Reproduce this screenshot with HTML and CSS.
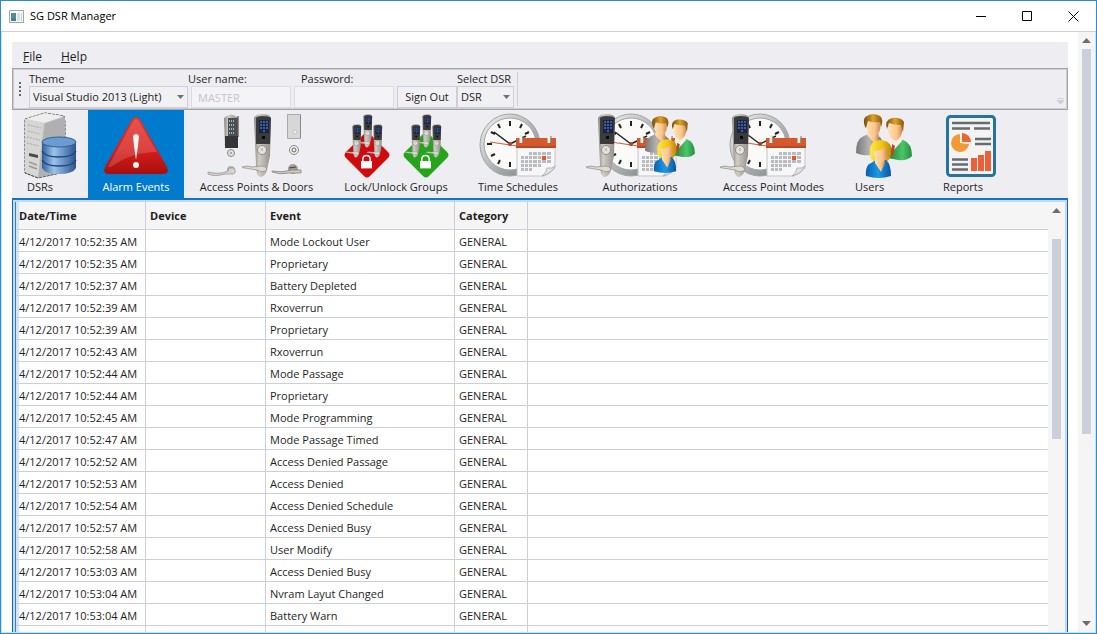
FILE: index.html
```html
<!DOCTYPE html>
<html lang="en">
<head>
<meta charset="utf-8">
<title>SG DSR Manager</title>
<link rel="stylesheet" href="styles.css">
</head>
<body>
<svg class="defs" aria-hidden="true">
  <defs>
    <linearGradient id="steel"><stop offset="0" stop-color="#8a867f"/><stop offset=".3" stop-color="#d0cdc7"/><stop offset="1" stop-color="#928e87"/></linearGradient>
    <linearGradient id="db"><stop offset="0" stop-color="#2e5f9e"/><stop offset=".35" stop-color="#9cc3ea"/><stop offset="1" stop-color="#2a5491"/></linearGradient>
    <linearGradient id="red" x2="0" y2="1"><stop offset="0" stop-color="#e0342c"/><stop offset=".55" stop-color="#d8201d"/><stop offset="1" stop-color="#a90d0e"/></linearGradient>
    <linearGradient id="rim" x2="1" y2="1"><stop offset="0" stop-color="#f4f4f4"/><stop offset=".5" stop-color="#b5b8b8"/><stop offset="1" stop-color="#777b7b"/></linearGradient>
    <linearGradient id="skin"><stop offset="0" stop-color="#ffe2b8"/><stop offset=".6" stop-color="#f9c68a"/><stop offset="1" stop-color="#c98548"/></linearGradient>
    <linearGradient id="hair"><stop offset="0" stop-color="#7a4a08"/><stop offset=".5" stop-color="#dda32a"/><stop offset="1" stop-color="#8a560d"/></linearGradient>
    <linearGradient id="blonde"><stop offset="0" stop-color="#ffe84d"/><stop offset=".6" stop-color="#efc010"/><stop offset="1" stop-color="#b98a08"/></linearGradient>
    <linearGradient id="grey"><stop offset="0" stop-color="#777"/><stop offset=".5" stop-color="#b5b5b5"/><stop offset="1" stop-color="#6f6f6f"/></linearGradient>
    <linearGradient id="green"><stop offset="0" stop-color="#1c7f35"/><stop offset=".6" stop-color="#4fc467"/><stop offset="1" stop-color="#1e9140"/></linearGradient>
    <linearGradient id="blue"><stop offset="0" stop-color="#0b5fb0"/><stop offset=".5" stop-color="#1b9ae6"/><stop offset="1" stop-color="#0a559f"/></linearGradient>
  </defs>
  <symbol id="lever" viewBox="0 0 31 64">
    <path d="M12 4Q14 0 20 0Q28 0 29 4L28 42L25 56Q23 63 18 63Q14 61 14 51Z" fill="url(#steel)"/>
    <path d="M14 4Q15 2 20 2Q27 2 29 4L28 30H14Z" fill="#3a3b3b"/>
    <path d="M17 6h10v13H17z" fill="#1b2440"/>
    <path d="M18 7h2v2h-2zM21 7h2v2h-2zM24 7h2v2h-2zM18 10h2v2h-2zM21 10h2v2h-2zM24 10h2v2h-2zM18 13h2v2h-2zM21 13h2v2h-2zM24 13h2v2h-2zM21 16h2v2h-2z" fill="#3f5ba6"/>
    <path d="M20 22h3v3h-3z" fill="#090909"/>
    <circle cx="20" cy="36" r="4.500" fill="#e4e2dd" stroke="#8f8b84"/>
    <path d="M20 34v3" stroke="#a5a199"/>
    <path d="M0 53Q5 51 10 53L20 52Q26 53 24 57Q19 59 15 56L3 54Q0 54 0 53Z" fill="#dedbd5" stroke="#8c8984" stroke-width=".7"/>
  </symbol>
  <symbol id="clock" viewBox="0 0 62 64">
    <ellipse cx="31" cy="32" rx="30" ry="31" fill="url(#rim)" stroke="#a2a6a6"/>
    <circle cx="31" cy="31" r="26" fill="#fafaf9" stroke="#a3a6a6"/>
    <path d="M31 8v5M31 49v5M8 31h5M49 31h5M19 11l2 4M43 11l-2 4M12 19l4 2M50 19l-4 2M12 43l4-2M19 51l2-4M43 51l-2-4M50 43l-4-2" stroke="#222" stroke-width="2"/>
    <path d="M31 31L15 19M31 31l16-8" stroke="#222" stroke-width="1.500"/>
    <path d="M11 29l27 4" stroke="#d75a37"/><circle cx="31" cy="31" r="2" fill="#b33c23"/>
  </symbol>
  <symbol id="calendar" viewBox="0 0 40 42">
    <path d="M1 8h38v25q-5 6-11 8H1z" fill="#f7f7f8" stroke="#c6c6c9"/>
    <path d="M0 3h40v10H0z" fill="#d4582c"/><path d="M0 11h40v2H0z" fill="#b94723"/>
    <path d="M5 0v8M33 0v8" stroke="#f2efea" stroke-width="3"/><path d="M7 1v8M35 1v8" stroke="#7e716b"/>
    <path d="M13 17h3v3h-3zM17 17h4v3h-4zM22 17h3v3h-3zM26 17h4v3h-4zM31 17h4v3h-4zM5 21h3v3H5zM9 21h3v3H9zM13 21h3v3h-3zM17 21h4v3h-4zM22 21h3v3h-3zM31 21h4v3h-4zM5 25h3v3H5zM9 25h3v3H9zM13 25h3v3h-3zM17 25h4v3h-4zM22 25h3v3h-3zM26 25h4v3h-4zM31 25h4v3h-4zM5 29h3v3H5zM9 29h3v3H9zM13 29h3v3h-3zM17 29h4v3h-4zM22 29h3v3h-3zM5 33h3v3H5zM9 33h3v3H9zM13 33h3v3h-3z" fill="#b8bcc0"/>
    <path d="M26 21h4v4h-4z" fill="#e8552a"/>
    <path d="M39 31Q35 39 26 41Q31 37 31 33Q36 34 39 31Z" fill="#e3e3e6" stroke="#9d9da2" stroke-width=".7"/>
  </symbol>
  <symbol id="people" viewBox="0 0 56 64">
    <path d="M0 39Q0 26 6 23L12 20L24 23L27 28V40Q8 43 0 39Z" fill="url(#grey)"/>
    <path d="M12 18h10l1 6l-4 6l-8-9z" fill="url(#skin)"/>
    <path d="M10 8Q10 3 17 3Q25 3 25 9L24 16Q21 23 17 23Q12 20 10 13Z" fill="url(#skin)"/>
    <path d="M9 13Q6 4 11 2Q17-2 24 2Q28 5 25 13L24 8Q18 9 12 7L10 14Z" fill="url(#hair)"/>
    <path d="M32 44V31Q34 28 39 26L47 26Q56 29 56 42Q52 47 42 46Z" fill="url(#green)"/>
    <path d="M34 24h11l1 3l-9 10l-4-8z" fill="#f4efe8"/><path d="M36 30l3 2l-2 9h-2z" fill="#cc3d20"/>
    <path d="M32 11Q33 6 40 6Q47 7 47 13Q46 24 40 27Q34 26 32 17Z" fill="url(#skin)"/>
    <path d="M31 15Q28 6 36 4Q45 3 48 8L47 18L45 11Q38 11 33 9Z" fill="url(#hair)"/>
    <path d="M14 41Q12 26 25 26Q37 27 35 40Q34 46 30 48H19Q14 46 14 41Z" fill="url(#blonde)"/>
    <path d="M10 62Q9 51 15 49L20 46L30 46Q35 50 35 62Q23 66 10 62Z" fill="url(#blue)"/>
    <path d="M19 45h9l1 4l-4 9l-6-9z" fill="url(#skin)"/>
    <path d="M17 37Q24 37 29 33L32 38Q31 47 25 49Q18 46 17 37Z" fill="url(#skin)"/>
  </symbol>
  <symbol id="padlock" viewBox="0 0 12 15">
    <path d="M0 7h12v8H0z" fill="#fff"/><path d="M2 8V5q0-4 4-4t4 4v3" fill="none" stroke="#fff" stroke-width="1.500"/>
  </symbol>
  <symbol id="up" viewBox="0 0 9 5"><path d="M0 5L4.500 0L9 5z" fill="#6d6d70"/></symbol>
  <symbol id="down" viewBox="0 0 9 5"><path d="M0 0L4.500 5L9 0z" fill="#6d6d70"/></symbol>
</svg>

<div class="window">
  <header class="titlebar">
    <svg class="app-icon" viewBox="0 0 15 13"><path d="M.5.5h14v12H.5z" fill="#f6f8f8" stroke="#9ca5ac"/><path d="M2 3h5v8H2z" fill="#4b9188"/><path d="M2 8h5v3H2z" fill="#52739d"/><path d="M8 3h3v8H8z" fill="#dbe1e3"/><path d="M12 3h1v8h-1z" fill="#bfd3dc"/></svg>
    <h1 class="title">SG DSR Manager</h1>
    <button class="caption" aria-label="Minimize"><svg viewBox="0 0 11 11"><path d="M0 5.500h10" stroke="#000"/></svg></button>
    <button class="caption" aria-label="Maximize"><svg viewBox="0 0 11 11"><path d="M.5.5h9v9h-9z" fill="none" stroke="#000"/></svg></button>
    <button class="caption" aria-label="Close"><svg viewBox="0 0 11 11"><path d="M.5.5l10 10M10.500.5l-10 10" stroke="#000"/></svg></button>
  </header>

  <div class="client">
    <main class="main">
      <nav class="menu"><button class="menu-item"><u>F</u>ile</button><button class="menu-item"><u>H</u>elp</button></nav>

      <form class="toolbar">
        <span class="grip"><i></i><i></i><i></i><i></i></span>
        <div class="field theme"><label for="theme">Theme</label>
          <span class="drop"><select id="theme"><option>Visual Studio 2013 (Light)</option></select></span></div>
        <div class="field credential"><label for="user">User name:</label><input id="user" type="text" placeholder="MASTER" disabled></div>
        <div class="field credential password"><label for="pass">Password:</label><input id="pass" type="password" disabled></div>
        <button class="sign-out" type="button">Sign Out</button>
        <div class="field dsr"><label for="dsr">Select DSR</label>
          <span class="drop"><select id="dsr"><option>DSR</option></select></span></div>
        <span class="divider"></span>
        <svg class="overflow" viewBox="0 0 7 6"><path d="M0 .5h7M0 2.500h7L3.500 6z" fill="#c9cad5" stroke="#c9cad5" stroke-width=".7"/></svg>
      </form>

      <nav class="tabs">
        <button class="tab start">
          <svg viewBox="12 112 76 68">
            <path d="M25 119l20-6l19 3l1 6v50l-27 6l-13-5z" fill="#c8c8c7" stroke="#333" stroke-dasharray="3 1"/>
            <path d="M25 119l20-6l19 3l-19 7z" fill="#ededec"/><path d="M45 123l20-6v54l-27 7z" fill="#aeb0b1"/><path d="M25 119l18 4l-5 54l-13-5z" fill="#d6d6d5"/>
            <path d="M28 125l13 3M28 131l12 3M27 137l13 3M27 143l12 3" stroke="#aaa" stroke-dasharray="2 1"/><path d="M29 153l9 2v3l-9-2z" fill="#4b4b4b"/><path d="M29 162l8 3M29 166l8 3" stroke="#999" stroke-width="1.500"/>
            <path d="M42 142v26q3 6 17 6t17-6v-26z" fill="url(#db)"/><path d="M42 151q3 6 17 6t17-6M42 160q3 6 17 6t17-6" fill="none" stroke="#1e477c" stroke-width="1.500"/><ellipse cx="59" cy="142" rx="17" ry="5" fill="#6a9bd1" stroke="#315f98"/>
          </svg><span>DSRs</span></button>
        <button class="tab active">
          <svg viewBox="88 112 96 68"><path d="M136 117q3 0 5 4l26 46q3 7-4 7h-54q-7 0-4-7l26-46q2-4 5-4z" fill="url(#red)"/><path d="M136 119q2 0 4 4l17 29q-26 0-46 15q-4 0-2-2l23-42q2-4 4-4z" fill="#fff" opacity=".16"/><path d="M133 136q3-4 6 0l-1 10l-2 14l-2-14z" fill="#f7f4ef"/><circle cx="136" cy="165" r="3" fill="#f7f4ef"/></svg>
          <span>Alarm Events</span></button>
        <button class="tab">
          <svg viewBox="184 112 145 68">
            <path d="M224 118q7-7 14 0v29h-13z" fill="url(#steel)"/><path d="M228 118h9v18h-9z" fill="#4a5153"/><path d="M229 121h6M229 125h6M229 129h6M229 133h6" stroke="#93b7bd" stroke-width="2" stroke-dasharray="1 1"/><path d="M225 136h13v12h-13z" fill="#353537"/><path d="M238 116v21" stroke="#222"/>
            <circle cx="231" cy="153" r="3.500" fill="#e2e1df" stroke="#8a8986"/><path d="M231 152v2" stroke="#777"/>
            <circle cx="231" cy="170" r="4" fill="#b7b4ae"/><path d="M208 172q12 3 20-1l1-3h5q3 5-1 6h-8q-11 3-17 0z" fill="#d6d3cd" stroke="#918d87" stroke-width=".7"/>
            <use href="#lever" x="242" y="114" width="31" height="64"/>
            <path d="M287.500 114.500h13v24h-13z" fill="#d7d7d8" stroke="#aaa"/><path d="M300.500 115v23" stroke="#888"/><circle cx="295" cy="132" r="2" fill="#eee" stroke="#aaa" stroke-width=".6"/>
            <circle cx="294" cy="150" r="4.500" fill="#f0efee" stroke="#888"/><circle cx="294" cy="150" r="2" fill="none" stroke="#666"/>
            <circle cx="293" cy="169" r="5" fill="#a29f9a"/><path d="M272 171q10 2 20-1h9v3h-12q-9 2-17-1z" fill="#d1cec8" stroke="#77746f" stroke-width=".7"/><path d="M289 168l7-1" stroke="#444"/>
          </svg><span>Access Points &amp; Doors</span></button>
        <button class="tab">
          <svg viewBox="329 112 134 68">
            <path d="M364 134q3-3 6 0l18 18q3 3 0 6l-18 18q-3 3-6 0l-18-18q-3-3 0-6z" fill="#cf0b10"/><path d="M423 134q3-3 6 0l18 18q3 3 0 6l-18 18q-3 3-6 0l-18-18q-3-3 0-6z" fill="#27a51a"/>
            <use href="#lever" x="356" y="114" width="18" height="34"/><use href="#lever" x="345" y="124" width="18" height="34"/><use href="#lever" x="366" y="124" width="18" height="34"/>
            <use href="#lever" x="415" y="114" width="18" height="34"/><use href="#lever" x="404" y="124" width="18" height="34"/><use href="#lever" x="425" y="124" width="18" height="34"/>
            <use href="#padlock" x="361" y="154" width="11" height="15"/><use href="#padlock" x="420" y="154" width="11" height="15"/>
          </svg><span>Lock/Unlock Groups</span></button>
        <button class="tab">
          <svg viewBox="463 112 110 68"><use href="#clock" x="479" y="113" width="62" height="64"/><use href="#calendar" x="516" y="135" width="40" height="42"/></svg>
          <span>Time Schedules</span></button>
        <button class="tab">
          <svg viewBox="573 112 134 68"><use href="#clock" x="600" y="113" width="62" height="64"/><use href="#calendar" x="637" y="135" width="40" height="42"/><use href="#lever" x="586" y="114" width="31" height="64"/><use href="#people" x="645" y="116" width="50" height="57"/></svg>
          <span>Authorizations</span></button>
        <button class="tab">
          <svg viewBox="707 112 133 68"><use href="#clock" x="729" y="113" width="62" height="64"/><use href="#calendar" x="766" y="135" width="40" height="42"/><use href="#lever" x="720" y="114" width="31" height="64"/></svg>
          <span>Access Point Modes</span></button>
        <button class="tab start">
          <svg viewBox="840 112 88 68"><use href="#people" x="856" y="114" width="56" height="64"/></svg><span>Users</span></button>
        <button class="tab start">
          <svg viewBox="928 112 82 68"><rect x="947.500" y="116.500" width="47" height="59" rx="3" fill="#f5f3f1" stroke="#25759b" stroke-width="3"/><path d="M952 123h38M952 128.500h18M974 128.500h16M975 139h16M975 144h16M952 159.500h16M952 164.500h16M952 169.500h16" stroke="#666b70" stroke-width="2.500"/><path d="M960 134v9l9 1a9 9 0 1 1-9-10z" fill="#f49a35"/><path d="M962 133a9 9 0 0 1 9 9h-9z" fill="#ec6539"/><path d="M971 158h6v13h-6zM978 155h6v16h-6zM985 151h6v20h-6z" fill="#eb6038"/></svg>
          <span>Reports</span></button>
      </nav>

      <section class="grid">
        <div class="grid-view">
          <table>
            <thead><tr><th class="c-date">Date/Time</th><th class="c-device">Device</th><th class="c-event">Event</th><th class="c-cat">Category</th><th></th></tr></thead>
            <tbody>
              <tr><td>4/12/2017 10:52:35 AM</td><td></td><td>Mode Lockout User</td><td>GENERAL</td><td></td></tr>
              <tr><td>4/12/2017 10:52:35 AM</td><td></td><td>Proprietary</td><td>GENERAL</td><td></td></tr>
              <tr><td>4/12/2017 10:52:37 AM</td><td></td><td>Battery Depleted</td><td>GENERAL</td><td></td></tr>
              <tr><td>4/12/2017 10:52:39 AM</td><td></td><td>Rxoverrun</td><td>GENERAL</td><td></td></tr>
              <tr><td>4/12/2017 10:52:39 AM</td><td></td><td>Proprietary</td><td>GENERAL</td><td></td></tr>
              <tr><td>4/12/2017 10:52:43 AM</td><td></td><td>Rxoverrun</td><td>GENERAL</td><td></td></tr>
              <tr><td>4/12/2017 10:52:44 AM</td><td></td><td>Mode Passage</td><td>GENERAL</td><td></td></tr>
              <tr><td>4/12/2017 10:52:44 AM</td><td></td><td>Proprietary</td><td>GENERAL</td><td></td></tr>
              <tr><td>4/12/2017 10:52:45 AM</td><td></td><td>Mode Programming</td><td>GENERAL</td><td></td></tr>
              <tr><td>4/12/2017 10:52:47 AM</td><td></td><td>Mode Passage Timed</td><td>GENERAL</td><td></td></tr>
              <tr><td>4/12/2017 10:52:52 AM</td><td></td><td>Access Denied Passage</td><td>GENERAL</td><td></td></tr>
              <tr><td>4/12/2017 10:52:53 AM</td><td></td><td>Access Denied</td><td>GENERAL</td><td></td></tr>
              <tr><td>4/12/2017 10:52:54 AM</td><td></td><td>Access Denied Schedule</td><td>GENERAL</td><td></td></tr>
              <tr><td>4/12/2017 10:52:57 AM</td><td></td><td>Access Denied Busy</td><td>GENERAL</td><td></td></tr>
              <tr><td>4/12/2017 10:52:58 AM</td><td></td><td>User Modify</td><td>GENERAL</td><td></td></tr>
              <tr><td>4/12/2017 10:53:03 AM</td><td></td><td>Access Denied Busy</td><td>GENERAL</td><td></td></tr>
              <tr><td>4/12/2017 10:53:04 AM</td><td></td><td>Nvram Layut Changed</td><td>GENERAL</td><td></td></tr>
              <tr><td>4/12/2017 10:53:04 AM</td><td></td><td>Battery Warn</td><td>GENERAL</td><td></td></tr>
              <tr><td></td><td></td><td></td><td></td><td></td></tr>
            </tbody>
          </table>
        </div>
        <div class="scrollbar inner">
          <button class="arrow" aria-label="Scroll up"><svg><use href="#up"/></svg></button>
          <div class="track"><div class="thumb"></div></div>
        </div>
      </section>
    </main>
    <div class="scrollbar outer">
      <button class="arrow" aria-label="Scroll page up"><svg><use href="#up"/></svg></button>
      <div class="track"><div class="thumb"></div></div>
      <button class="arrow" aria-label="Scroll page down"><svg><use href="#down"/></svg></button>
    </div>
  </div>
</div>
</body>
</html>
```
FILE: styles.css
```css
* { box-sizing: border-box; }
body { margin: 0; color: #1e1e1e; font: 12px/16px "Open Sans", "Noto Sans", sans-serif; }
button, input, select { font: inherit; color: inherit; margin: 0; border: 0; padding: 0; background: none; border-radius: 0; }
svg { display: block; }
.defs { position: absolute; width: 0; height: 0; }

.window { display: flex; flex-direction: column; height: 100vh; background: #fff; border: 1px solid #278cd8; overflow: hidden; }
.titlebar { display: flex; align-items: center; flex: none; height: 31px; padding-left: 8px; border-bottom: 1px solid #ccced9; }
.app-icon { width: 15px; height: 13px; margin-right: 6px; }
.title { flex: 1; margin: 0; font-size: 11px; font-weight: 400; color: #000; }
.caption { display: flex; align-items: center; justify-content: center; width: 46px; height: 30px; }
.caption svg { width: 11px; height: 11px; }

.client { display: flex; flex: 1; min-height: 0; border: solid #c9e4f8; border-width: 0 1px 1px; }
.main { display: flex; flex: 1; flex-direction: column; min-width: 0; padding: 10px 10px 0; }

.menu { display: flex; flex: none; gap: 19px; height: 26px; padding: 3px 0 0 11px; background: #eeeef2; }

.toolbar { display: flex; align-items: flex-end; flex: none; height: 42px; padding: 0 3px 1px 5px; background: #eeeef2; border: 1px solid #a2a4a8; box-shadow: inset 0 0 0 1px #ccced3; }
.grip { display: flex; flex-direction: column; gap: 2px; width: 11px; padding-bottom: 12px; }
.grip i { width: 2px; height: 2px; margin-left: 1px; background: #666; }
.field { display: flex; flex-direction: column; font-size: 11px; }
.field label { line-height: 14px; white-space: nowrap; }
.theme { width: 159px; }
.credential { width: 103px; }
.credential input { height: 22px; margin-left: 3px; padding: 0 6px; border: 1px solid #dcdde4; background: #f4f4f6; }
.credential input::placeholder { color: #c5c5ca; opacity: 1; }
.password label { padding-left: 10px; }
.drop { position: relative; display: block; }
.drop select { width: 100%; height: 22px; padding: 0 3px; appearance: none; border: 1px solid #ccced9; background: #f1f1f4; }
.drop::after { content: ""; position: absolute; right: 4px; top: 9px; width: 7px; height: 4px; background: #717171; clip-path: polygon(0 0, 100% 0, 50% 100%); pointer-events: none; }
.sign-out { width: 60px; height: 22px; margin-left: 3px; border: 1px solid #ccced9; background: #f1f1f4; font-size: 11px; }
.dsr { width: 57px; }
.divider { width: 1px; height: 34px; margin: 0 auto 2px 3px; background: #ccced9; }
.overflow { width: 7px; height: 6px; margin-bottom: 4px; }

.tabs { display: grid; flex: none; grid-template-columns: 76px 96px 145px 134px 110px 134px 133px 88px 82px; height: 90px; background: #eeeef2; border-bottom: 2px solid #0e78bd; }
.tab { display: flex; flex-direction: column; align-items: center; padding-top: 2px; font-size: 11px; line-height: 14px; white-space: nowrap; }
.tab svg { width: 100%; height: 68px; }
.tab.active { background: #007acc; color: #fff; }
.tab.start { align-items: flex-start; }
.tab.start span { padding-left: 15px; }

.grid { display: flex; flex: 1; min-height: 0; border: solid #0f69ad; border-width: 0 1px; box-shadow: inset 2px 0 #c4d8f0, inset -2px 0 #c4d8f0, inset 0 2px #c4d8f0; padding: 2px 2px 0; }
.grid-view { flex: 1; min-width: 0; overflow: hidden; border-left: 1px solid #3b82bd; }
table { width: 100%; table-layout: fixed; border-collapse: separate; border-spacing: 0; }
th, td { height: 22px; padding: 0 4px; border: solid #ccced9; border-width: 0 1px 1px 0; text-align: left; font-size: 11px; line-height: 16px; white-space: nowrap; }
td { padding-top: 2px; }
th { height: 28px; background: #f5f5f5; font-weight: 700; }
th:last-child, td:last-child { border-right: 0; }
td:first-child, th:first-child { padding-left: 3px; background-image: linear-gradient(90deg, #d3e4f7 3px, transparent 3px); }
.c-date { width: 130px; }
.c-device { width: 120px; }
.c-event { width: 189px; }
.c-cat { width: 73px; }

.scrollbar { display: flex; flex: none; flex-direction: column; width: 17px; background: #f5f5f5; }
.arrow { display: flex; align-items: center; justify-content: center; width: 100%; height: 17px; }
.arrow svg { width: 9px; height: 5px; }
.track { flex: 1; padding: 0 4px; }
.thumb { width: 9px; background: #ccced9; }
.inner .arrow { height: 37px; padding-bottom: 20px; }
.inner .thumb { height: 51%; }
.outer .thumb { height: 68%; }
```
